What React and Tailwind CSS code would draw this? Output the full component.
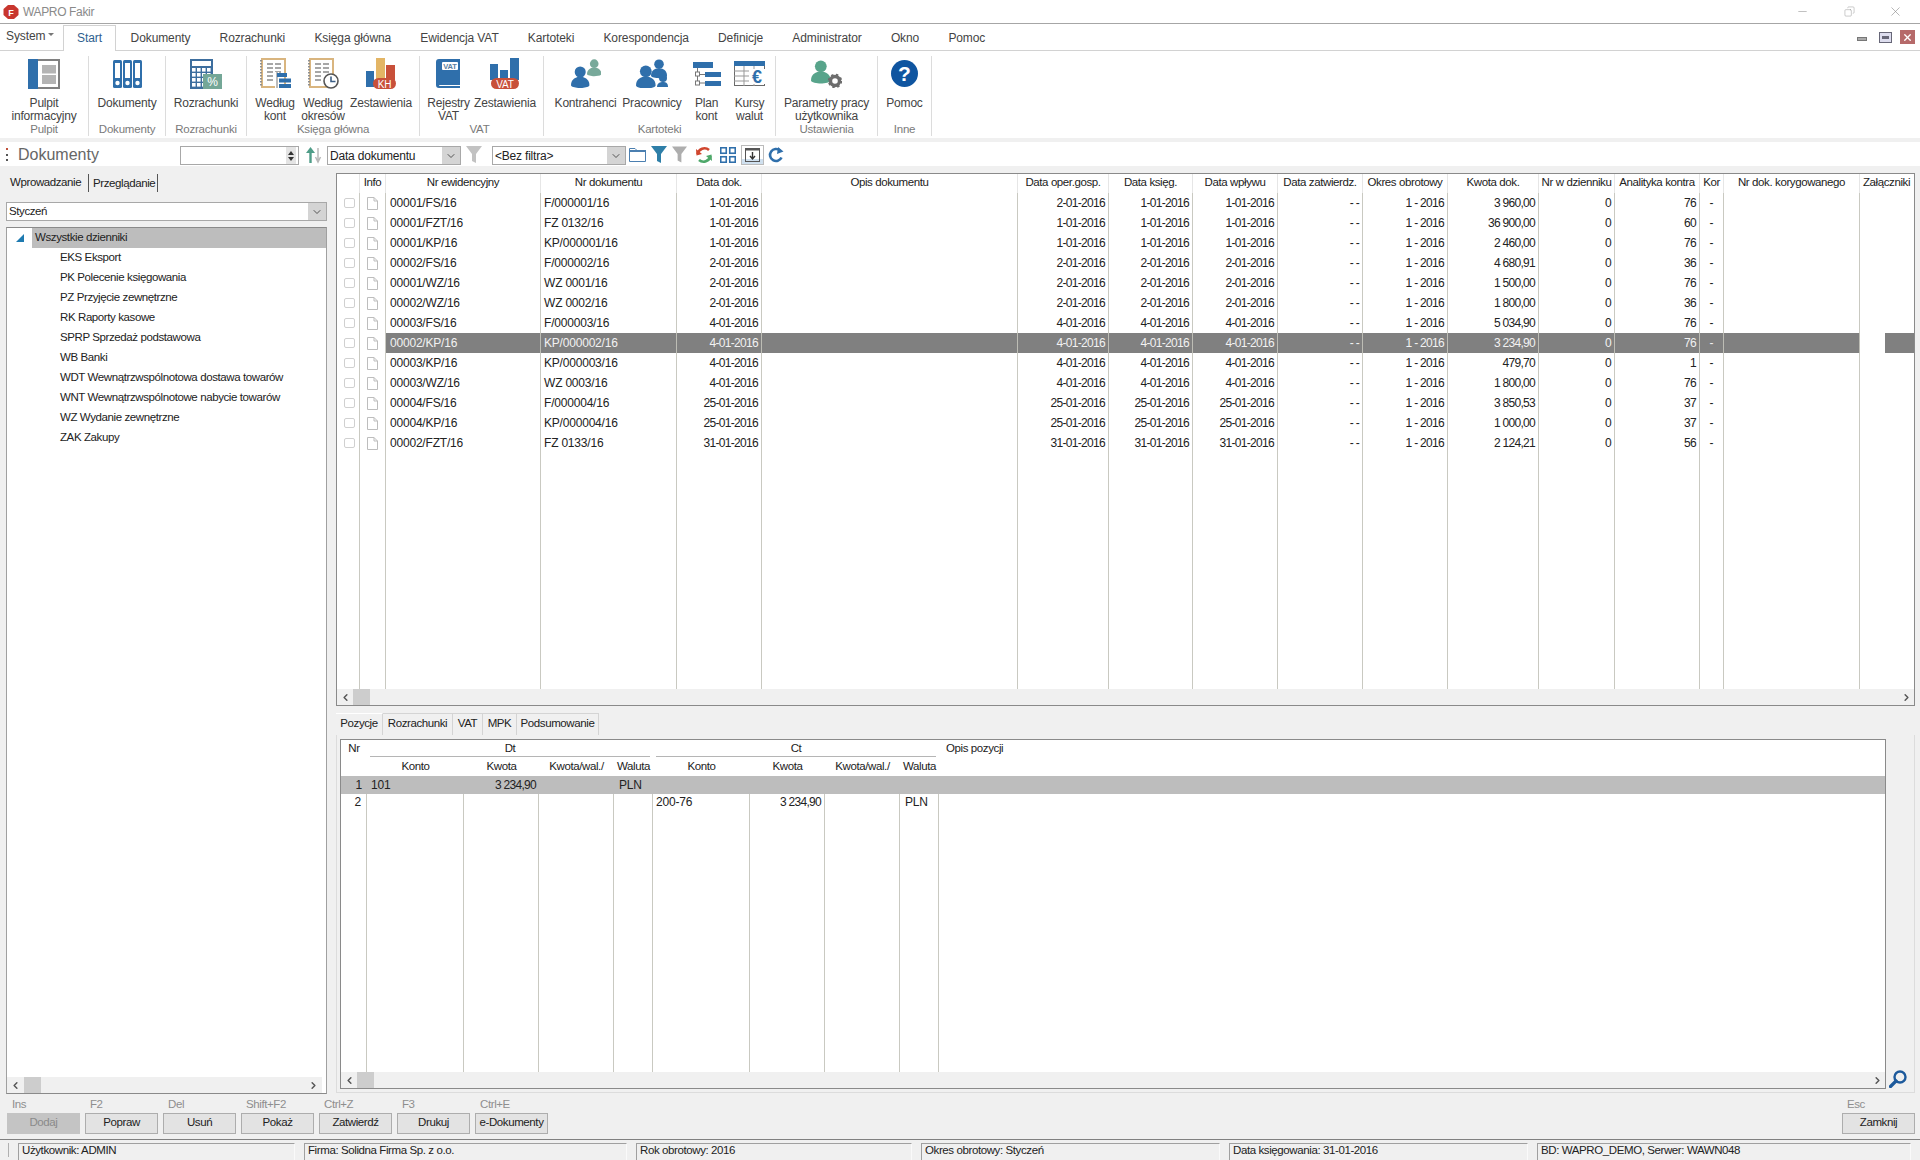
import { ChevronDown, ChevronLeft, ChevronRight, Copy, Minus, X } from 'lucide-react';

const blue = '#2f6fab';

const documents = [
  ['00001/FS/16', 'F/000001/16', '1-01-2016', '2-01-2016', '1-01-2016', '1-01-2016', '3 960,00', '76'],
  ['00001/FZT/16', 'FZ 0132/16', '1-01-2016', '1-01-2016', '1-01-2016', '1-01-2016', '36 900,00', '60'],
  ['00001/KP/16', 'KP/000001/16', '1-01-2016', '1-01-2016', '1-01-2016', '1-01-2016', '2 460,00', '76'],
  ['00002/FS/16', 'F/000002/16', '2-01-2016', '2-01-2016', '2-01-2016', '2-01-2016', '4 680,91', '36'],
  ['00001/WZ/16', 'WZ 0001/16', '2-01-2016', '2-01-2016', '2-01-2016', '2-01-2016', '1 500,00', '76'],
  ['00002/WZ/16', 'WZ 0002/16', '2-01-2016', '2-01-2016', '2-01-2016', '2-01-2016', '1 800,00', '36'],
  ['00003/FS/16', 'F/000003/16', '4-01-2016', '4-01-2016', '4-01-2016', '4-01-2016', '5 034,90', '76'],
  ['00002/KP/16', 'KP/000002/16', '4-01-2016', '4-01-2016', '4-01-2016', '4-01-2016', '3 234,90', '76'],
  ['00003/KP/16', 'KP/000003/16', '4-01-2016', '4-01-2016', '4-01-2016', '4-01-2016', '479,70', '1'],
  ['00003/WZ/16', 'WZ 0003/16', '4-01-2016', '4-01-2016', '4-01-2016', '4-01-2016', '1 800,00', '76'],
  ['00004/FS/16', 'F/000004/16', '25-01-2016', '25-01-2016', '25-01-2016', '25-01-2016', '3 850,53', '37'],
  ['00004/KP/16', 'KP/000004/16', '25-01-2016', '25-01-2016', '25-01-2016', '25-01-2016', '1 000,00', '37'],
  ['00002/FZT/16', 'FZ 0133/16', '31-01-2016', '31-01-2016', '31-01-2016', '31-01-2016', '2 124,21', '56'],
];

const journals = [
  'EKS Eksport',
  'PK Polecenie księgowania',
  'PZ Przyjęcie zewnętrzne',
  'RK Raporty kasowe',
  'SPRP Sprzedaż podstawowa',
  'WB Banki',
  'WDT Wewnątrzwspólnotowa dostawa towarów',
  'WNT Wewnątrzwspólnotowe nabycie towarów',
  'WZ Wydanie zewnętrzne',
  'ZAK Zakupy',
];

const headers = [
  '', 'Info', 'Nr ewidencyjny', 'Nr dokumentu', 'Data dok.', 'Opis dokumentu', 'Data oper.gosp.', 'Data księg.',
  'Data wpływu', 'Data zatwierdz.', 'Okres obrotowy', 'Kwota dok.', 'Nr w dzienniku', 'Analityka kontra', 'Kor',
  'Nr dok. korygowanego', 'Załączniki',
];

const menuTabs = ['Dokumenty', 'Rozrachunki', 'Księga główna', 'Ewidencja VAT', 'Kartoteki', 'Korespondencja', 'Definicje', 'Administrator', 'Okno', 'Pomoc'];

const actions = [
  ['Ins', 'Dodaj', true],
  ['F2', 'Popraw'],
  ['Del', 'Usuń'],
  ['Shift+F2', 'Pokaż'],
  ['Ctrl+Z', 'Zatwierdź'],
  ['F3', 'Drukuj'],
  ['Ctrl+E', 'e-Dokumenty'],
];

const docCols = 'grid grid-cols-[23px_26px_155px_136px_85px_256px_91px_84px_85px_85px_85px_91px_76px_85px_24px_136px_54px]';
const posCols = 'grid grid-cols-[26px_97px_75px_75px_39px_97px_75px_75px_39px_1fr]';
const narrow = 'text-[11.5px] tracking-[-0.4px]';
const numeric = 'tracking-[-0.7px]';

function PulpitIcon() {
  return (
    <svg width="32" height="30" viewBox="0 0 32 30">
      <rect width="32" height="30" fill="#808080" />
      <rect width="10" height="30" fill={blue} />
      <rect x="10" y="2" width="20" height="26" fill="#fff" />
      <rect x="14" y="6" width="14" height="8.5" fill="#b4b4b4" />
      <rect x="14" y="16" width="14" height="9" fill="#b4b4b4" />
    </svg>
  );
}

function BindersIcon() {
  return (
    <svg width="29" height="28" viewBox="0 0 29 28">
      {[0, 10, 20].map((x) => (
        <g key={x}>
          <rect x={x} width="9" height="28" rx="1.5" fill={blue} />
          <rect x={x + 2} y="3" width="5" height="15" fill="#fff" />
          <circle cx={x + 4.5} cy="23" r="2.2" fill="#fff" />
        </g>
      ))}
    </svg>
  );
}

function CalcIcon() {
  return (
    <svg width="32" height="30" viewBox="0 0 32 30">
      <rect width="23" height="30" fill="#3d6e9e" />
      <rect x="2" y="2" width="19" height="5" fill="#fff" />
      {[9, 14, 19, 24].map((y) =>
        [2, 7, 12, 17].map((x) => <rect key={`${x}-${y}`} x={x} y={y} width="3.6" height="3.6" fill="#fff" />),
      )}
      <rect x="13" y="15" width="19" height="15" fill="#74a797" />
      <text x="22.5" y="27" fontSize="12" fill="#fff" textAnchor="middle">%</text>
    </svg>
  );
}

function NotebookBase() {
  return (
    <>
      <rect x="1" y="0" width="25" height="30" fill="#d9b57f" />
      <rect x="3" y="2" width="21" height="26" fill="#fff" />
      <path d="M1 2v26" stroke="#8f8f8f" strokeWidth="2" strokeDasharray="1.5 1.5" />
      <path d="M7 6h6M15 6h6M7 10h6M15 10h6M7 14h6M15 14h6M7 18h6M7 22h6" stroke="#8a8a8a" strokeWidth="1.3" />
    </>
  );
}

function NotebookListIcon() {
  return (
    <svg width="31" height="31" viewBox="0 0 31 31">
      <NotebookBase />
      <rect x="15" y="14" width="4" height="17" fill="#fff" />
      <path d="M17 14v16" stroke="#777" />
      <rect x="17" y="15" width="10" height="4" fill={blue} />
      <rect x="19" y="20.5" width="12" height="4" fill={blue} />
      <rect x="19" y="26" width="12" height="4" fill={blue} />
    </svg>
  );
}

function NotebookClockIcon() {
  return (
    <svg width="31" height="31" viewBox="0 0 31 31">
      <NotebookBase />
      <circle cx="23" cy="23" r="7" fill="#fff" stroke="#555" strokeWidth="1.6" />
      <path d="M23 18.5V23.5H27.5" fill="none" stroke="#3c5f86" strokeWidth="1.6" />
    </svg>
  );
}

function Badge({ label, x, width }) {
  return (
    <>
      <rect x={x} y={20} width={width} height={11} rx={5.5} fill="#c8503a" />
      <text x={x + width / 2} y={29.5} fontSize="10" fill="#fff" textAnchor="middle">{label}</text>
    </>
  );
}

function ChartKhIcon() {
  return (
    <svg width="31" height="31" viewBox="0 0 31 31">
      <rect x="0" y="13" width="8" height="16" fill={blue} />
      <rect x="10" y="0" width="9" height="22" fill="#e3b565" />
      <rect x="20" y="7" width="9" height="15" fill="#c8503a" />
      <Badge label="KH" x={7} width={23} />
    </svg>
  );
}

function BookVatIcon() {
  return (
    <svg width="25" height="29" viewBox="0 0 25 29">
      <path d="M3 0H24V26H4Q3 26 3 27H24V29H3Q0 29 0 26V3Q0 0 3 0Z" fill={blue} />
      <rect x="6" y="3" width="16" height="8" rx="1" fill="#fff" />
      <text x="14" y="10" fontSize="7.5" fontWeight="700" fill="#5b7fa3" textAnchor="middle">VAT</text>
    </svg>
  );
}

function ChartVatIcon() {
  return (
    <svg width="30" height="31" viewBox="0 0 30 31">
      <rect x="0" y="6" width="8" height="16" fill={blue} />
      <rect x="10" y="12" width="8" height="10" fill={blue} />
      <rect x="20" y="0" width="9" height="22" fill={blue} />
      <Badge label="VAT" x={1} width={28} />
    </svg>
  );
}

function Person({ x, y, s, fill }) {
  return (
    <g transform={`translate(${x} ${y}) scale(${s})`}>
      <circle cx="10" cy="6.5" r="6" fill={fill} />
      <path d="M0 21C0 15 4 13 7 12H13C16 13 20 15 20 21C20 23 14 24 10 24S0 23 0 21Z" fill={fill} />
    </g>
  );
}

function KontrahenciIcon() {
  return (
    <svg width="30" height="29" viewBox="0 0 30 29">
      <Person x="16" y="0" s="0.72" fill="#78a99a" />
      <Person x="0" y="7" s="0.92" fill={blue} />
    </svg>
  );
}

function PracownicyIcon() {
  return (
    <svg width="32" height="29" viewBox="0 0 32 29">
      <Person x="15" y="0" s="0.8" fill={blue} />
      <circle cx="27" cy="19" r="4" fill={blue} />
      <path d="M21 28C21 24 24 23 27 23S32 24 32 28Z" fill={blue} />
      <Person x="0" y="6" s="0.98" fill={blue} />
    </svg>
  );
}

function PlanIcon() {
  return (
    <svg width="28" height="24" viewBox="0 0 28 24">
      <rect x="0" y="0" width="20" height="6" fill={blue} />
      <path d="M4.5 6V21M4.5 12.5H13M4.5 21H13" stroke="#777" fill="none" />
      <rect x="2.5" y="10" width="4" height="4" fill="#fff" stroke="#777" />
      <rect x="2.5" y="19" width="4" height="4" fill="#fff" stroke="#777" />
      <rect x="12" y="10" width="16" height="5" fill={blue} />
      <rect x="12" y="19" width="16" height="5" fill={blue} />
    </svg>
  );
}

function KursyIcon() {
  return (
    <svg width="31" height="25" viewBox="0 0 31 25">
      <rect x="0.5" y="0.5" width="30" height="24" fill="#fff" stroke="#6a6a6a" />
      <rect width="31" height="5" fill={blue} />
      <path d="M0 10H31M0 15H31M0 20H31M10 5V25M20 5V25" stroke="#999" />
      <rect x="15" y="8" width="16" height="15" fill="#fff" />
      <text x="23" y="22" fontSize="18" fontWeight="700" fill={blue} textAnchor="middle">€</text>
    </svg>
  );
}

function ParametryIcon() {
  return (
    <svg width="31" height="28" viewBox="0 0 31 28">
      <Person x="0" y="0" s="0.98" fill="#58a48b" />
      <circle cx="24" cy="21" r="4.5" fill="none" stroke="#6d6d6d" strokeWidth="3.4" />
      <circle cx="24" cy="21" r="6.2" fill="none" stroke="#6d6d6d" strokeWidth="2" strokeDasharray="2.4 2.5" />
    </svg>
  );
}

function HelpIcon() {
  return (
    <div className="flex h-[27px] w-[27px] items-center justify-center rounded-full bg-[#0f55a0] text-[21px] font-bold leading-none tracking-normal text-white">?</div>
  );
}

function RibbonItem({ lines, icon, className }) {
  return (
    <div className={`flex flex-col items-center pt-[2px] ${className}`}>
      <div className="flex h-[31px] items-center justify-center">{icon}</div>
      <div className="mt-[8px] text-center leading-[13px] whitespace-nowrap">
        {lines.map((line) => (
          <div key={line}>{line}</div>
        ))}
      </div>
    </div>
  );
}

function RibbonGroup({ label, className, children }) {
  return (
    <div className={`flex h-[80px] flex-col border-r border-[#dcdcdc] ${className}`}>
      <div className="flex h-[67px] justify-center">{children}</div>
      <div className="h-[13px] text-center text-[11.5px] leading-[13px] text-[#7a7a7a]">{label}</div>
    </div>
  );
}

function Ribbon() {
  return (
    <div className="flex h-[87px] bg-white pt-[5px] text-[12px] tracking-[-0.2px] text-[#444]">
      <RibbonGroup label="Pulpit" className="w-[89px]">
        <RibbonItem className="w-[88px]" lines={['Pulpit', 'informacyjny']} icon={<PulpitIcon />} />
      </RibbonGroup>
      <RibbonGroup label="Dokumenty" className="w-[77px]">
        <RibbonItem className="w-[76px]" lines={['Dokumenty']} icon={<BindersIcon />} />
      </RibbonGroup>
      <RibbonGroup label="Rozrachunki" className="w-[81px]">
        <RibbonItem className="w-[80px]" lines={['Rozrachunki']} icon={<CalcIcon />} />
      </RibbonGroup>
      <RibbonGroup label="Księga główna" className="w-[173px]">
        <RibbonItem className="w-[52px]" lines={['Według', 'kont']} icon={<NotebookListIcon />} />
        <RibbonItem className="w-[44px]" lines={['Według', 'okresów']} icon={<NotebookClockIcon />} />
        <RibbonItem className="w-[72px]" lines={['Zestawienia']} icon={<ChartKhIcon />} />
      </RibbonGroup>
      <RibbonGroup label="VAT" className="w-[124px] pr-[4px]">
        <RibbonItem className="w-[51px]" lines={['Rejestry', 'VAT']} icon={<BookVatIcon />} />
        <RibbonItem className="w-[62px]" lines={['Zestawienia']} icon={<ChartVatIcon />} />
      </RibbonGroup>
      <RibbonGroup label="Kartoteki" className="w-[232px]">
        <RibbonItem className="w-[71px]" lines={['Kontrahenci']} icon={<KontrahenciIcon />} />
        <RibbonItem className="w-[62px]" lines={['Pracownicy']} icon={<PracownicyIcon />} />
        <RibbonItem className="w-[47px]" lines={['Plan', 'kont']} icon={<PlanIcon />} />
        <RibbonItem className="w-[39px]" lines={['Kursy', 'walut']} icon={<KursyIcon />} />
      </RibbonGroup>
      <RibbonGroup label="Ustawienia" className="w-[102px]">
        <RibbonItem className="w-[101px]" lines={['Parametry pracy', 'użytkownika']} icon={<ParametryIcon />} />
      </RibbonGroup>
      <RibbonGroup label="Inne" className="w-[54px]">
        <RibbonItem className="w-[53px]" lines={['Pomoc']} icon={<HelpIcon />} />
      </RibbonGroup>
    </div>
  );
}

function TitleBar() {
  return (
    <div className="flex h-[24px] items-center border-b border-[#a6a6a6] bg-white pl-[3px]">
      <svg width="16" height="16" viewBox="0 0 16 16">
        <path d="M5 1H11L15.5 5V11L11 15H5L.5 11V5Z" fill="#c8362e" />
        <text x="8" y="11.5" fontSize="9" fontWeight="700" fill="#fff" textAnchor="middle">F</text>
      </svg>
      <span className="ml-[4px] text-[12px] tracking-[-0.35px] text-[#8a8a8a]">WAPRO Fakir</span>
      <div className="ml-auto flex items-center text-[#8c8c8c]">
        <Minus size={13} strokeWidth={1} className="mr-[35px]" />
        <Copy size={11} strokeWidth={1} className="mr-[33px] -scale-x-100" />
        <X size={15} strokeWidth={1} className="mr-[17px]" />
      </div>
    </div>
  );
}

function MenuBar() {
  return (
    <div className="flex h-[27px] items-end border-b border-[#d2d2d2] bg-white pl-[6px] text-[12px] tracking-[-0.1px] text-[#444]">
      <div className="mb-[5px] flex w-[57px] items-center">
        System
        <span className="mb-[3px] ml-[3px] border-x-[3px] border-t-[3px] border-x-transparent border-t-[#777]" />
      </div>
      <div className="-mb-px flex h-[26px] w-[53px] items-center justify-center border-x border-t border-[#d2d2d2] bg-white pb-[1px] text-[#2f5f8f]">Start</div>
      {menuTabs.map((tab) => (
        <div key={tab} className="flex h-[25px] items-center px-[14.6px]">{tab}</div>
      ))}
      <div className="mb-[6px] ml-auto flex items-center pr-[5px]">
        <span className="mr-[12px] mt-[4px] h-[4px] w-[10px] border border-[#777] bg-[#aaa]" />
        <span className="mr-[8px] flex h-[11px] w-[13px] items-center justify-center border border-[#667] bg-[#dde]">
          <span className="h-[3px] w-[7px] bg-[#667]" />
        </span>
        <span className="flex h-[14px] w-[15px] items-center justify-center bg-[#b66a6a]">
          <X size={11} strokeWidth={3} color="#fff" />
        </span>
      </div>
    </div>
  );
}

function ComboArrow() {
  return (
    <span className="flex h-full w-[18px] items-center justify-center bg-[#d4d4d4]">
      <ChevronDown size={12} strokeWidth={1.8} color="#444" />
    </span>
  );
}

function Funnel({ color }) {
  return (
    <svg width="16" height="17" viewBox="0 0 16 17">
      <path d="M0 0H16L10 8V17L6 15V8Z" fill={color} />
    </svg>
  );
}

function Toolbar() {
  return (
    <div className="flex h-[24px] items-start bg-white pt-[5px] text-[12px] tracking-[-0.2px] text-[#222]">
      <div className="mt-[1px] ml-[6px] flex h-[13px] w-[3px] flex-col justify-between">
        <span className="h-[2px] w-[2px] bg-[#c0503a]" />
        <span className="h-[2px] w-[2px] bg-[#555]" />
        <span className="h-[2px] w-[2px] bg-[#555]" />
      </div>
      <span className="ml-[9px] -mt-[2px] w-[162px] text-[16px] leading-[20px] tracking-normal text-[#666]">Dokumenty</span>
      <div className="-mt-[1px] flex h-[19px] w-[119px] justify-end border border-[#a8a8a8] bg-white pr-[2px]">
        <div className="flex w-[10px] flex-col items-center justify-center gap-[2px] bg-[#e4e4e4]">
          <span className="border-x-[3px] border-b-[4px] border-x-transparent border-b-[#333]" />
          <span className="border-x-[3px] border-t-[4px] border-x-transparent border-t-[#333]" />
        </div>
      </div>
      <svg className="ml-[7px] -mt-[1px]" width="16" height="18" viewBox="0 0 16 18">
        <path d="M4.5 17V4" stroke="#4f9d88" strokeWidth="2.4" fill="none" />
        <path d="M0 7L4.5 1L9 7Z" fill="#4f9d88" />
        <path d="M12 2V14M9.5 11L12 16L14.5 11" stroke="#b8b8b8" strokeWidth="1.5" fill="none" />
      </svg>
      <div className="ml-[5px] -mt-[1px] flex h-[19px] w-[134px] items-center border border-[#a8a8a8] pl-[2px]">
        <span className="flex-1">Data dokumentu</span>
        <ComboArrow />
      </div>
      <div className="ml-[3px] -mt-[1px] flex w-[20px] justify-center">
        <Funnel color="#c2c2c2" />
      </div>
      <div className="ml-[8px] -mt-[1px] flex h-[19px] w-[134px] items-center border border-[#a8a8a8] pl-[2px]">
        <span className="flex-1">{'<Bez filtra>'}</span>
        <ComboArrow />
      </div>
      <svg className="ml-[3px]" width="17" height="15" viewBox="0 0 17 15">
        <path d="M.5 14.5V1.5H6L8 3.5H16.5V14.5Z" fill="#fff" stroke="#4b7fb0" />
        <rect x="0" y="3" width="17" height="2" fill="#4b7fb0" />
      </svg>
      <div className="ml-[4px] -mt-[1px] flex w-[18px] justify-center">
        <Funnel color="#2e7fa8" />
      </div>
      <div className="ml-[4px] -mt-[1px] flex w-[15px] justify-center">
        <Funnel color="#aeaeae" />
      </div>
      <svg className="ml-[8px] -mt-[1px]" width="18" height="18" viewBox="0 0 18 18">
        <path d="M2.5 8A7 7 0 0 1 14 4" stroke="#d0462e" strokeWidth="2.6" fill="none" />
        <path d="M1 3L1.5 9.5L7 8Z" fill="#d0462e" />
        <path d="M15.5 10A7 7 0 0 1 4 14" stroke="#4ea86a" strokeWidth="2.6" fill="none" />
        <path d="M17 15L16.5 8.5L11 10Z" fill="#4ea86a" />
      </svg>
      <svg className="ml-[7px]" width="16" height="16" viewBox="0 0 16 16">
        {[0, 9].map((y) =>
          [0, 9].map((x) => (
            <rect key={`${x}-${y}`} x={x + 0.75} y={y + 0.75} width="5.5" height="5.5" fill="none" stroke={blue} strokeWidth="1.6" />
          )),
        )}
      </svg>
      <div className="ml-[5px] -mt-[2px] flex h-[20px] w-[23px] items-center justify-center border border-[#bbb] bg-[linear-gradient(#fff_70%,#cfe0ef_70%)]">
        <svg width="15" height="14" viewBox="0 0 15 14">
          <rect x=".5" y=".5" width="14" height="13" fill="none" stroke="#555" />
          <rect y="0" width="15" height="2.5" fill="#555" />
          <path d="M7.5 4V10M5 8L7.5 11L10 8" fill="none" stroke="#333" strokeWidth="1.4" />
        </svg>
      </div>
      <svg className="ml-[4px]" width="16" height="16" viewBox="0 0 16 16">
        <path d="M13.5 10.5A6 6 0 1 1 12 3.5" stroke={blue} strokeWidth="2.6" fill="none" />
        <path d="M10 0L15.5 4.5L9 7Z" fill={blue} />
      </svg>
    </div>
  );
}

function ScrollBar({ arrowClass = 'w-[16px]' }) {
  return (
    <div className="flex h-[16px] shrink-0 items-center justify-between bg-[#f0f0f0]">
      <div className="flex h-full items-center">
        <span className={`flex justify-center ${arrowClass}`}>
          <ChevronLeft size={11} strokeWidth={3.2} color="#555" />
        </span>
        <span className="h-full w-[17px] bg-[#cdcdcd]" />
      </div>
      <span className={`flex justify-center ${arrowClass}`}>
        <ChevronRight size={11} strokeWidth={3.2} color="#555" />
      </span>
    </div>
  );
}

function JournalPanel() {
  return (
    <div className={`ml-[6px] flex w-[321px] shrink-0 flex-col pb-[3px] text-[#222] ${narrow}`}>
      <div className="-ml-px mt-[8px] flex h-[18px]">
        <div className="flex w-[84px] items-start border-r border-[#555] pl-[5px]">Wprowadzanie</div>
        <div className="flex w-[69px] items-end border-r border-[#555] pl-[4px]">Przeglądanie</div>
      </div>
      <div className="mt-[10px] flex h-[19px] items-center border border-[#a8a8a8] bg-white pl-[2px]">
        <span className="flex-1">Styczeń</span>
        <ComboArrow />
      </div>
      <div className="mt-[6px] flex min-h-0 flex-1 flex-col border-x border-y border-x-[#a0a0a0] border-y-[#8a8a8a] bg-white">
        <div className="flex h-[20px] items-center">
          <span className="flex w-[25px] justify-center">
            <svg width="8" height="8" viewBox="0 0 8 8">
              <path d="M8 0V8H0Z" fill="#1e7ab0" />
            </svg>
          </span>
          <span className="flex h-full flex-1 items-center bg-[#bdbdbd] pl-[3px]">Wszystkie dzienniki</span>
        </div>
        {journals.map((journal) => (
          <div key={journal} className="flex h-[20px] items-center pl-[53px]">{journal}</div>
        ))}
        <div className="flex-1" />
        <div className="pr-[4px]">
          <ScrollBar arrowClass="w-[17px]" />
        </div>
      </div>
    </div>
  );
}

function DocumentCell({ align, selected, children }) {
  const alignClass = align === 'right' ? `justify-end pr-[3px] ${numeric}` : align === 'center' ? 'justify-center' : align === 'first' ? 'pl-[4px]' : 'pl-[3px]';
  return (
    <div
      className={`flex h-[20px] items-center border-r ${alignClass} ${
        selected ? 'border-[#bdbdb5] bg-[#808080] text-[#f2f2f2]' : 'border-[#c9c9c1]'
      }`}
    >
      {children}
    </div>
  );
}

function DocumentRow({ row, selected }) {
  const [nr, dok, dataDok, oper, ksieg, wplyw, kwota, kontra] = row;
  return (
    <div className={docCols}>
      <div className="flex h-[20px] items-center justify-center border-r border-[#c9c9c1] pl-[2px]">
        <span className="h-[10px] w-[11px] rounded-[2px] border border-[#d0d0d0]" />
      </div>
      <div className="flex h-[20px] items-center justify-center border-r border-[#c9c9c1]">
        <svg width="11" height="13" viewBox="0 0 11 13">
          <path d="M.5.5H7L10.5 4V12.5H.5ZM7 .5V4H10.5" fill="#fff" stroke="#bdbdbd" />
        </svg>
      </div>
      <DocumentCell selected={selected} align="first">{nr}</DocumentCell>
      <DocumentCell selected={selected}>{dok}</DocumentCell>
      <DocumentCell selected={selected} align="right">{dataDok}</DocumentCell>
      <DocumentCell selected={selected} />
      <DocumentCell selected={selected} align="right">{oper}</DocumentCell>
      <DocumentCell selected={selected} align="right">{ksieg}</DocumentCell>
      <DocumentCell selected={selected} align="right">{wplyw}</DocumentCell>
      <DocumentCell selected={selected} align="right">- -</DocumentCell>
      <DocumentCell selected={selected} align="right">1 - 2016</DocumentCell>
      <DocumentCell selected={selected} align="right">{kwota}</DocumentCell>
      <DocumentCell selected={selected} align="right">0</DocumentCell>
      <DocumentCell selected={selected} align="right">{kontra}</DocumentCell>
      <DocumentCell selected={selected} align="center">-</DocumentCell>
      <DocumentCell selected={selected} />
      <div className="flex h-[20px] justify-end">
        {selected ? <span className="h-full w-[29px] bg-[#808080]" /> : null}
      </div>
    </div>
  );
}

function DocumentsGrid() {
  return (
    <div className="flex h-[533px] flex-col overflow-hidden border border-[#8a8a8a] bg-white">
      <div className={`${docCols} h-[19px] shrink-0 ${narrow}`}>
        {headers.map((header, index) => (
          <div
            key={header || index}
            className={`flex items-center justify-center whitespace-nowrap border-r pb-[3px] ${index === 16 ? 'border-transparent' : 'border-[#e6e6e6]'}`}
          >
            {header}
          </div>
        ))}
      </div>
      {documents.map((row, index) => (
        <DocumentRow key={row[0]} row={row} selected={index === 7} />
      ))}
      <div className={`${docCols} min-h-0 flex-1`}>
        {headers.slice(0, 16).map((header, index) => (
          <div key={header || index} className="border-r border-[#c9c9c1]" />
        ))}
      </div>
      <ScrollBar />
    </div>
  );
}

function PositionsGrid() {
  const subHeaders = ['Konto', 'Kwota', 'Kwota/wal./', 'Waluta'];
  return (
    <div className="flex h-[350px] w-[1546px] flex-col overflow-hidden border border-[#8a8a8a] bg-white">
      <div className={`${posCols} h-[36px] shrink-0 ${narrow}`}>
        <div className="col-span-1 row-span-2 text-center">Nr</div>
        <div className="col-span-4 mx-[3px] h-[17px] border-b border-[#b5b5b5] pt-[1px] text-center leading-[14px]">Dt</div>
        <div className="col-span-4 mx-[3px] h-[17px] border-b border-[#b5b5b5] pt-[1px] text-center leading-[14px]">Ct</div>
        <div className="row-span-2 pl-[7px]">Opis pozycji</div>
        {[...subHeaders, ...subHeaders].map((header, index) => (
          <div key={`${header}-${index}`} className="flex h-[19px] items-center justify-center">{header}</div>
        ))}
      </div>
      <div className={`${posCols} h-[18px] shrink-0 items-center bg-[#bdbdbd] pb-[2px]`}>
        <div className="pr-[5px] text-right">1</div>
        <div className="pl-[4px]">101</div>
        <div className={`pr-[3px] text-right ${numeric}`}>3 234,90</div>
        <div />
        <div className="pl-[5px]">PLN</div>
      </div>
      <div className={`${posCols} min-h-0 flex-1 leading-[16px]`}>
        <div className="border-r border-[#c9c9c1] pr-[5px] text-right">2</div>
        <div className="border-r border-[#c9c9c1]" />
        <div className="border-r border-[#c9c9c1]" />
        <div className="border-r border-[#c9c9c1]" />
        <div className="border-r border-[#c9c9c1]" />
        <div className="border-r border-[#c9c9c1] pl-[3px]">200-76</div>
        <div className={`border-r border-[#c9c9c1] pr-[3px] text-right ${numeric}`}>3 234,90</div>
        <div className="border-r border-[#c9c9c1]" />
        <div className="border-r border-[#c9c9c1] pl-[5px]">PLN</div>
      </div>
      <ScrollBar />
    </div>
  );
}

function DetailTabs() {
  const tabs = [
    ['Pozycje', 'w-[47px]'],
    ['Rozrachunki', 'w-[70px]'],
    ['VAT', 'w-[30px]'],
    ['MPK', 'w-[34px]'],
    ['Podsumowanie', 'w-[82px]'],
  ];
  return (
    <div className={`mt-[7px] flex h-[22px] ${narrow}`}>
      {tabs.map(([tab, width], index) => (
        <div
          key={tab}
          className={`flex items-center justify-center border-t border-r pb-[1px] ${width} ${
            index === 0 ? 'border-t-white border-r-[#d4d4d4]' : 'border-[#d4d4d4]'
          }`}
        >
          {tab}
        </div>
      ))}
    </div>
  );
}

function DocumentsPanel() {
  return (
    <div className="ml-[9px] flex w-[1579px] shrink-0 flex-col pt-[7px] text-[12px] tracking-[-0.2px] text-[#222]">
      <DocumentsGrid />
      <DetailTabs />
      <div className="flex border-x border-b border-[#dcdcdc] pt-[4px] pb-[3px] pl-[3px]">
        <PositionsGrid />
        <div className="flex flex-1 items-end justify-center pb-[1px] pr-[4px]">
          <svg width="18" height="18" viewBox="0 0 18 18">
            <circle cx="11" cy="7" r="5.5" fill="none" stroke="#1d5a9c" strokeWidth="2.4" />
            <path d="M7 11L1.5 16.5" stroke="#1d5a9c" strokeWidth="3.2" strokeLinecap="round" />
          </svg>
        </div>
      </div>
    </div>
  );
}

function ActionButton({ shortcut, label, disabled }) {
  return (
    <div className="flex w-[73px] flex-col">
      <div className="h-[16px] pl-[5px] leading-[14px] text-[#8e8e8e]">{shortcut}</div>
      <div
        className={`flex h-[21px] items-center justify-center border pb-[1px] ${
          disabled ? 'border-[#c4c4c4] bg-[#c4c4c4] text-[#8a8a8a]' : 'border-[#adadad] bg-[#e3e3e3] text-[#222]'
        }`}
      >
        {label}
      </div>
    </div>
  );
}

function ActionBar() {
  return (
    <div className={`flex h-[42px] justify-between pl-[7px] pr-[5px] ${narrow}`}>
      <div className="flex gap-[5px]">
        {actions.map(([shortcut, label, disabled]) => (
          <ActionButton key={label} shortcut={shortcut} label={label} disabled={disabled} />
        ))}
      </div>
      <ActionButton shortcut="Esc" label="Zamknij" />
    </div>
  );
}

function StatusBar() {
  const cells = [
    ['Użytkownik: ADMIN', 'w-[277px]'],
    ['Firma: Solidna Firma Sp. z o.o.', 'w-[323px]'],
    ['Rok obrotowy: 2016', 'w-[276px]'],
    ['Okres obrotowy: Styczeń', 'w-[299px]'],
    ['Data księgowania: 31-01-2016', 'w-[299px]'],
    ['BD: WAPRO_DEMO, Serwer: WAWN048', 'w-[374px]'],
  ];
  return (
    <div className={`flex h-[21px] items-start gap-[9px] border-t border-[#808080] pt-[3px] text-[#222] ${narrow}`}>
      <span className="ml-[8px] h-[14px] w-px bg-[#b0b0b0]" />
      {cells.map(([text, width]) => (
        <div
          key={text}
          className={`flex h-[17px] items-center border-t border-l border-r border-t-[#a0a0a0] border-l-[#a0a0a0] border-r-[#fafafa] pb-[2px] pl-[3px] ${width}`}
        >
          {text}
        </div>
      ))}
    </div>
  );
}

export default function App() {
  return (
    <div className="flex h-[1160px] w-[1920px] flex-col overflow-hidden bg-[#f0f0f0] font-['Liberation_Sans',Arial,sans-serif]">
      <TitleBar />
      <MenuBar />
      <Ribbon />
      <div className="h-[4px]" />
      <Toolbar />
      <div className="flex min-h-0 flex-1">
        <JournalPanel />
        <DocumentsPanel />
      </div>
      <ActionBar />
      <StatusBar />
    </div>
  );
}
